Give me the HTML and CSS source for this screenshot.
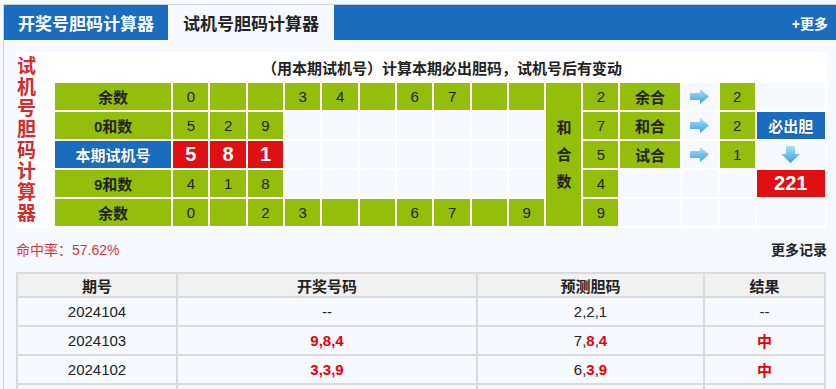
FILE: index.html
```html
<!DOCTYPE html>
<html lang="zh-CN">
<head>
    <meta charset="UTF-8">
    <title>试机号胆码计算器</title>
    <link rel="stylesheet" href="styles.css">
</head>
<body>
<div class="box">
    <div class="tabs">
        <div class="tab">开奖号胆码计算器</div>
        <div class="tab on">试机号胆码计算器</div>
        <div class="more">+更多</div>
    </div>

    <div class="main">
        <table class="calc">
            <colgroup>
                <col style="width:35px"><col style="width:116px">
                <col class="n"><col class="n"><col class="n"><col class="n"><col class="n">
                <col class="n"><col class="n"><col class="n"><col class="n"><col class="n">
                <col style="width:35px"><col style="width:35px"><col style="width:59px">
                <col style="width:36px"><col style="width:35px"><col style="width:68px">
            </colgroup>
            <tr class="title">
                <td rowspan="6" class="side"><div>试机号胆码计算器</div></td>
                <td colspan="17">（用本期试机号）计算本期必出胆码，试机号后有变动</td>
            </tr>
            <tr>
                <td class="g lbl">余数</td>
                <td class="g">0</td><td class="g"></td><td class="g"></td><td class="g">3</td><td class="g">4</td>
                <td class="g"></td><td class="g">6</td><td class="g">7</td><td class="g"></td><td class="g"></td>
                <td rowspan="5" class="g lbl sum">和<br>合<br>数</td>
                <td class="g">2</td><td class="g lbl">余合</td>
                <td class="e"><svg class="arr" width="19" height="15" viewBox="0 0 19 15"><defs><linearGradient id="ga" x1="0" y1="0" x2="0" y2="1"><stop offset="0" stop-color="#a9e0fa"/><stop offset="1" stop-color="#3b9fe0"/></linearGradient></defs><polygon points="0,4 10,4 10,0 19,7.5 10,15 10,11 0,11" fill="url(#ga)"/></svg></td>
                <td class="g">2</td><td class="e"></td>
            </tr>
            <tr>
                <td class="g lbl">0和数</td>
                <td class="g">5</td><td class="g">2</td><td class="g">9</td>
                <td class="e"></td><td class="e"></td><td class="e"></td><td class="e"></td><td class="e"></td><td class="e"></td><td class="e"></td>
                <td class="g">7</td><td class="g lbl">和合</td>
                <td class="e"><svg class="arr" width="19" height="15" viewBox="0 0 19 15"><polygon points="0,4 10,4 10,0 19,7.5 10,15 10,11 0,11" fill="url(#ga)"/></svg></td>
                <td class="g">2</td><td class="b">必出胆</td>
            </tr>
            <tr>
                <td class="b">本期试机号</td>
                <td class="r">5</td><td class="r">8</td><td class="r">1</td>
                <td class="e"></td><td class="e"></td><td class="e"></td><td class="e"></td><td class="e"></td><td class="e"></td><td class="e"></td>
                <td class="g">5</td><td class="g lbl">试合</td>
                <td class="e"><svg class="arr" width="19" height="15" viewBox="0 0 19 15"><polygon points="0,4 10,4 10,0 19,7.5 10,15 10,11 0,11" fill="url(#ga)"/></svg></td>
                <td class="g">1</td>
                <td class="e"><svg class="arr" width="19" height="17" viewBox="0 0 19 17"><polygon points="5,0 14,0 14,8 19,8 9.5,17 0,8 5,8" fill="url(#ga)"/></svg></td>
            </tr>
            <tr>
                <td class="g lbl">9和数</td>
                <td class="g">4</td><td class="g">1</td><td class="g">8</td>
                <td class="e"></td><td class="e"></td><td class="e"></td><td class="e"></td><td class="e"></td><td class="e"></td><td class="e"></td>
                <td class="g">4</td><td class="e"></td><td class="e"></td><td class="e"></td>
                <td class="r">221</td>
            </tr>
            <tr>
                <td class="g lbl">余数</td>
                <td class="g">0</td><td class="g"></td><td class="g">2</td><td class="g">3</td><td class="g"></td>
                <td class="g"></td><td class="g">6</td><td class="g">7</td><td class="g"></td><td class="g">9</td>
                <td class="g">9</td><td class="e"></td><td class="e"></td><td class="e"></td><td class="e"></td>
            </tr>
        </table>

        <div class="stat">
            <span class="rate">命中率：57.62%</span>
            <span class="morelog">更多记录</span>
        </div>

        <table class="hist">
            <colgroup>
                <col style="width:158px"><col style="width:298px"><col style="width:225px"><col style="width:119px">
            </colgroup>
            <tr><th>期号</th><th>开奖号码</th><th>预测胆码</th><th>结果</th></tr>
            <tr><td>2024104</td><td>--</td><td>2,2,1</td><td>--</td></tr>
            <tr><td>2024103</td><td><b>9,8,4</b></td><td>7,<b>8</b>,<b>4</b></td><td><b>中</b></td></tr>
            <tr><td>2024102</td><td><b>3,3,9</b></td><td>6,<b>3</b>,<b>9</b></td><td><b>中</b></td></tr>
            <tr><td></td><td></td><td></td><td></td></tr>
        </table>
    </div>
</div>
</body>
</html>
```

FILE: styles.css
```css
body {
    margin: 0;
    padding: 4px 0 0 3px;
    background: #f6fafe;
    font-family: "Liberation Sans", "Noto Sans CJK SC", sans-serif;
    color: #222;
    overflow: hidden;
}
.box {
    border-top: 1px solid #c9d1da;
    border-left: 1px solid #c9d1da;
}
.tabs {
    display: flex;
    height: 35px;
    background: #1a6dbe;
}
.tab {
    width: 164px;
    display: flex;
    align-items: center;
    justify-content: center;
    font-size: 17px;
    font-weight: bold;
    color: #fff;
}
.tab.on {
    width: 166px;
    background: #f6fafe;
    color: #222;
}
.more {
    margin-left: auto;
    align-self: center;
    padding-right: 8px;
    font-size: 14px;
    font-weight: bold;
    color: #fff;
}
.main {
    padding: 12px 0 0 12px;
}
.calc {
    width: 811px;
    table-layout: fixed;
    border-spacing: 2px;
    background: #fff;
}
.calc col.n {
    width: 35.3px;
}
.calc td {
    height: 27px;
    padding: 0;
    text-align: center;
    font-size: 15px;
}
.title td {
    padding-left: 4px;
    font-weight: bold;
}
.calc td.side {
    padding: 0;
    text-align: left;
    vertical-align: middle;
}
.side div {
    width: 20px;
    margin-left: -1px;
    font-size: 19px;
    line-height: 21px;
    font-weight: bold;
    color: #d42a30;
}
.g {
    background: #94be0c;
}
.e {
    background: #f6fafe;
}
.lbl {
    font-weight: bold;
}
.sum {
    line-height: 27px;
}
.b {
    background: #1a6dbe;
    color: #fff;
    font-weight: bold;
    text-shadow: 0 0 1px #0b3a6a;
}
.calc td.r {
    background: #e00f14;
    color: #fff;
    font-size: 20px;
    font-weight: bold;
}
.arr {
    display: block;
    margin: 0 auto;
}
.stat {
    width: 811px;
    display: flex;
    justify-content: space-between;
    margin: 12px 0 12px;
    line-height: 20px;
    font-size: 14px;
}
.rate {
    color: #db3239;
}
.morelog {
    font-weight: bold;
}
.hist {
    width: 810px;
    table-layout: fixed;
    border-spacing: 2px;
    background: #dadada;
}
.hist th {
    height: 22px;
    padding: 0;
    background: #f1f1f1;
    font-size: 15px;
}
.hist td {
    height: 27px;
    padding: 0;
    background: #f6fafe;
    text-align: center;
    font-size: 15px;
}
.hist b {
    color: #e8000b;
}
```
